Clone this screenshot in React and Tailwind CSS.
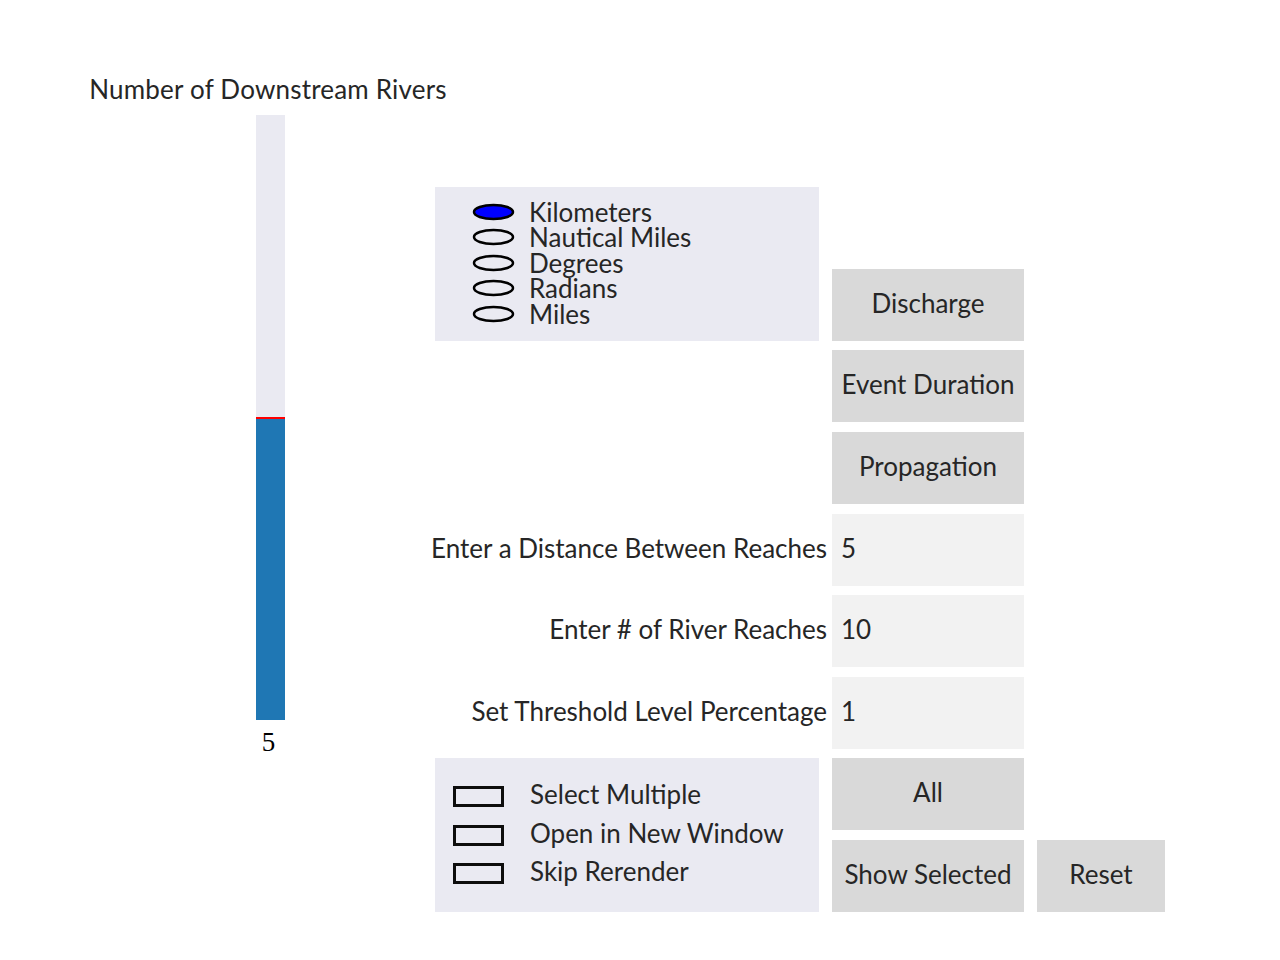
import React from "react";

const font = { fontFamily: "Lato, 'Liberation Sans', sans-serif" };

function Radio({ on, label }) {
  return (
    <div className="flex items-center h-[25.5px]">
      <svg width="43" height="18" viewBox="0 0 43 18" className="shrink-0">
        <ellipse cx="21.5" cy="9" rx="19.5" ry="7" fill={on ? "#0000ff" : "none"} stroke="#000" strokeWidth="2.5" />
      </svg>
      <span className="ml-[14px] leading-[24px] whitespace-nowrap">{label}</span>
    </div>
  );
}

function Check({ label }) {
  return (
    <div className="flex items-center h-[38.5px]">
      <div className="w-[51px] h-[21px] border-[3px] border-[#0d0d0d] shrink-0" />
      <span className="ml-[26px] leading-none pb-[5px] whitespace-nowrap">{label}</span>
    </div>
  );
}

function Btn({ children, className = "" }) {
  return (
    <div className={"bg-[#d9d9d9] flex items-center justify-center whitespace-nowrap pb-[3px] " + className}>{children}</div>
  );
}

export default function App() {
  return (
    <div className="w-[1280px] h-[960px] bg-white flex items-start text-[#262626] text-[26px]" style={font}>
      <div className="ml-[105px] w-[330px] flex flex-col items-center mt-[74px]">
        <div className="whitespace-nowrap leading-[30px] tracking-[0.2px] -ml-[4px]">Number of Downstream Rivers</div>
        <div className="mt-[11px] w-[29px] h-[605px] flex flex-col">
          <div className="flex-1 bg-[#eaeaf2]" />
          <div className="h-[2.5px] bg-[#ff0000]" />
          <div className="h-[301px] bg-[#1f77b4]" />
        </div>
        <div className="mt-[8px] leading-[28px] text-[27px] text-black -ml-[3px]" style={{ fontFamily: "'Liberation Serif', serif" }}>5</div>
      </div>
      <div className="mt-[187px] grid grid-cols-[384px_192px_128px] auto-rows-[72px] gap-x-[13px] gap-y-[9.625px]">
        <div className="col-start-1 row-start-1 row-span-2 bg-[#eaeaf2] flex flex-col pl-[37px] pt-[12px]">
          <Radio on label="Kilometers" />
          <Radio label="Nautical Miles" />
          <Radio label="Degrees" />
          <Radio label="Radians" />
          <Radio label="Miles" />
        </div>
        <Btn className="col-start-2 row-start-2">Discharge</Btn>
        <Btn className="col-start-2 row-start-3">Event Duration</Btn>
        <Btn className="col-start-2 row-start-4">Propagation</Btn>
        <div className="col-start-1 row-start-5 flex items-center justify-end -mr-2 whitespace-nowrap pb-[3px]">Enter a Distance Between Reaches</div>
        <div className="col-start-2 row-start-5 bg-[#f2f2f2] flex items-center pl-[9px] pb-[3px]">5</div>
        <div className="col-start-1 row-start-6 flex items-center justify-end -mr-2 whitespace-nowrap pb-[3px]">Enter # of River Reaches</div>
        <div className="col-start-2 row-start-6 bg-[#f2f2f2] flex items-center pl-[9px] pb-[3px]">10</div>
        <div className="col-start-1 row-start-7 flex items-center justify-end -mr-2 whitespace-nowrap pb-[3px]">Set Threshold Level Percentage</div>
        <div className="col-start-2 row-start-7 bg-[#f2f2f2] flex items-center pl-[9px] pb-[3px]">1</div>
        <div className="col-start-1 row-start-8 row-span-2 bg-[#eaeaf2] flex flex-col justify-center pl-[18px]">
          <Check label="Select Multiple" />
          <Check label="Open in New Window" />
          <Check label="Skip Rerender" />
        </div>
        <Btn className="col-start-2 row-start-8">All</Btn>
        <Btn className="col-start-2 row-start-9">Show Selected</Btn>
        <Btn className="col-start-3 row-start-9">Reset</Btn>
      </div>
    </div>
  );
}
